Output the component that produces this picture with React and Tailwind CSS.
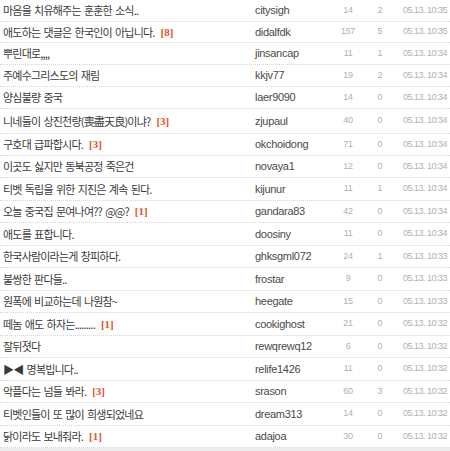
const rows = [
  { t: "마음을 치유해주는 훈훈한 소식..", a: "citysigh", v: "14", c: "2", d: "05.13. 10:35", h: "h-[22px]" },
  { t: "애도하는 댓글은 한국인이 아닙니다.", n: "8", a: "didalfdk", v: "157", c: "5", d: "05.13. 10:35", h: "h-[21px]" },
  { t: "뿌린대로,,,,", a: "jinsancap", v: "11", c: "1", d: "05.13. 10:34", h: "h-[22px]" },
  { t: "주예수그리스도의 재림", a: "kkjv77", v: "19", c: "2", d: "05.13. 10:34", h: "h-[22px]" },
  { t: "양심불량 중국", a: "laer9090", v: "14", c: "0", d: "05.13. 10:34", h: "h-[22px]" },
  { t: "니네들이 상진천량(喪盡天良)이냐?", n: "3", a: "zjupaul", v: "40", c: "0", d: "05.13. 10:34", h: "h-[25px]" },
  { t: "구호대 급파합시다.", n: "3", a: "okchoidong", v: "71", c: "0", d: "05.13. 10:34", h: "h-[22px]" },
  { t: "이곳도 싫지만 동북공정 죽은건", a: "novaya1", v: "12", c: "0", d: "05.13. 10:34", h: "h-[22px]" },
  { t: "티벳 독립을 위한 지진은 계속 된다.", a: "kijunur", v: "11", c: "1", d: "05.13. 10:34", h: "h-[23px]" },
  { t: "오늘 중국집 문여나여?? @@?", n: "1", a: "gandara83", v: "42", c: "0", d: "05.13. 10:34", h: "h-[22px]" },
  { t: "애도를 표합니다.", a: "doosiny", v: "11", c: "0", d: "05.13. 10:34", h: "h-[23px]" },
  { t: "한국사람이라는게 창피하다.", a: "ghksgml072", v: "24", c: "1", d: "05.13. 10:33", h: "h-[22px]" },
  { t: "불쌍한 판다들..", a: "frostar", v: "9", c: "0", d: "05.13. 10:33", h: "h-[23px]" },
  { t: "원폭에 비교하는데 나원참~", a: "heegate", v: "15", c: "0", d: "05.13. 10:33", h: "h-[22px]" },
  { t: "떼놈 애도 하자는.........", n: "1", a: "cookighost", v: "21", c: "0", d: "05.13. 10:32", h: "h-[23px]" },
  { t: "잘뒤졋다", a: "rewqrewq12", v: "6", c: "0", d: "05.13. 10:32", h: "h-[22px]" },
  { t: "▶◀ 명복빕니다..", a: "relife1426", v: "11", c: "0", d: "05.13. 10:32", h: "h-[23px]" },
  { t: "악플다는 넘들 봐라.", n: "3", a: "srason", v: "60", c: "3", d: "05.13. 10:32", h: "h-[22px]" },
  { t: "티벳인들이 또 많이 희생되었네요", a: "dream313", v: "14", c: "0", d: "05.13. 10:32", h: "h-[23px]" },
  { t: "닭이라도 보내줘라.", n: "1", a: "adajoa", v: "30", c: "0", d: "05.13. 10:32", h: "h-[22px]" },
];

export default function App() {
  return (
    <div className="w-[450px] h-[451px] bg-white overflow-hidden">
      {rows.map((r, i) => (
        <div
          key={i}
          className={`flex items-center box-border border-b border-dotted border-[#d6d6d6] ${r.h}`}
        >
          <div className="w-[255px] pl-[3px] flex items-center whitespace-nowrap text-[11px] tracking-[-0.8px] [word-spacing:1.5px] text-[#3a3a3a] font-['Noto_Sans_CJK_KR',sans-serif]">
            <span>{r.t}</span>
            {r.n && (
              <span className="ml-[6px] tracking-normal text-[11px] font-bold text-[#e0562b] font-['Liberation_Serif',serif]">
                [{r.n}]
              </span>
            )}
          </div>
          <div className="w-[78px] text-[11px] tracking-[-0.3px] text-[#4a4a4a] font-['Liberation_Sans',sans-serif]">
            {r.a}
          </div>
          <div className="w-[30px] text-center text-[9px] tracking-[-0.3px] text-[#b0b0b0] font-['Liberation_Sans',sans-serif]">
            {r.v}
          </div>
          <div className="w-[34px] text-center text-[9px] text-[#b0b0b0] font-['Liberation_Sans',sans-serif]">
            {r.c}
          </div>
          <div className="pl-[6px] whitespace-nowrap text-[9px] tracking-[-0.5px] text-[#b0b0b0] font-['Liberation_Sans',sans-serif]">
            {r.d}
          </div>
        </div>
      ))}
      <div className="h-[3px] bg-[#ececec]"></div>
    </div>
  );
}
